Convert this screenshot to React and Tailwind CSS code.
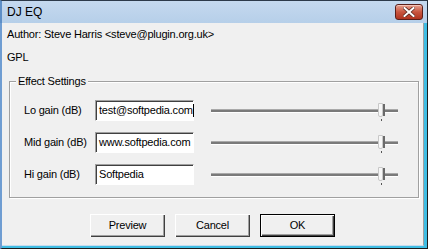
import React from 'react';

const rows = [
  { label: 'Lo gain (dB)', value: 'test@softpedia.com', caret: true },
  { label: 'Mid gain (dB)', value: 'www.softpedia.com' },
  { label: 'Hi gain (dB)', value: 'Softpedia' },
];

const Slider = () => (
  <div className="relative w-[187px] h-[21px] flex items-center">
    {/* track */}
    <div className="w-full h-[4px] border-t border-t-[#a9a9a9] bg-[#7a7a7a] border-b border-b-white" />
    {/* thumb */}
    <div className="absolute left-[167px] top-[3px] w-[8px] h-[14px] flex">
      <div className="w-[5px] h-full bg-[#f7f7f7] border border-[#c8c8c8] rounded-b-[2px]" />
      <div className="w-[2px] h-[12px] mt-[1px] bg-[#6a6a6a]" />
    </div>
    <div className="absolute left-[170px] top-[19px] w-[1px] h-[2px] bg-[#555]" />
  </div>
);

const Button = ({ children, primary }) => (
  <button
    className={
      'w-[75px] h-[23px] bg-[#f0f0f0] text-[11px] text-black ' +
      (primary
        ? 'border border-black shadow-[inset_1px_1px_0_#fff,inset_-1px_-1px_0_#404040,inset_-2px_-2px_0_#a0a0a0]'
        : 'shadow-[inset_1px_1px_0_#fff,inset_-1px_-1px_0_#404040,inset_-2px_-2px_0_#a0a0a0]')
    }
  >
    {children}
  </button>
);

export default function App() {
  return (
    <div className="w-[428px] h-[249px] bg-[#f0f0f0] flex flex-col overflow-hidden font-['Liberation_Sans',Arial,sans-serif] text-[11px] tracking-[-0.2px] text-black">

      {/* Title bar */}
      <div className="h-[23px] shrink-0 flex items-center justify-between border-t border-t-[#2d3a4a] border-l-2 border-l-[#5e8fc7] border-r border-r-[#1e2a36] bg-gradient-to-b from-[#c5d9ef] to-[#b6cfe9]">
        <span className="pl-[5px] text-[12px] tracking-normal text-black">DJ EQ</span>
        <div className="mr-[4px] w-[28px] h-[16px] rounded-[3px] border border-[#5a1f1a] bg-gradient-to-b from-[#e6a090] via-[#c8553f] to-[#b0331f] flex items-center justify-center shadow-[inset_0_1px_0_#f3c3b6]">
          <svg width="12" height="10" viewBox="0 0 12 10">
            <path d="M1.5 1 L10.5 9 M10.5 1 L1.5 9" stroke="#5a2a22" strokeWidth="3.6" strokeLinecap="square" />
            <path d="M1.5 1 L10.5 9 M10.5 1 L1.5 9" stroke="#ffffff" strokeWidth="2" strokeLinecap="square" />
          </svg>
        </div>
      </div>

      {/* Body */}
      <div className="flex-1 flex flex-col border-l-2 border-l-[#6f9dd2] border-b border-b-[#1c1c1c] border-r border-r-[#1c1c1c]">
        <div className="flex-1 flex flex-col border-b-2 border-b-[#3fbde3] border-r-[3px] border-r-[#3fbde3]">
          <div className="flex-1 flex flex-col border-r border-r-[#a0a0a0] border-b border-b-[#c6dcef]">

            <div className="pl-[5px] pt-[5px] leading-[13px]">Author: Steve Harris &lt;steve@plugin.org.uk&gt;</div>
            <div className="pl-[5px] pt-[10px] leading-[13px]">GPL</div>

            {/* Effect Settings group */}
            <div className="relative ml-[7px] mr-[4px] mt-[17px] h-[117px] border border-[#a0a0a0] shadow-[1px_1px_0_#fff,inset_1px_1px_0_#fff] pt-[18px] pl-[14px] flex flex-col gap-[11px]">
              <span className="absolute left-[6px] -top-[7px] px-[2px] bg-[#f0f0f0] leading-[13px]">Effect Settings</span>
              {rows.map((r) => (
                <div key={r.label} className="flex items-center h-[21px]">
                  <span className="w-[71px]">{r.label}</span>
                  <div className="w-[99px] h-[21px] bg-white border border-t-[#a0a0a0] border-l-[#a0a0a0] border-b-white border-r-white shadow-[inset_1px_1px_0_#404040] flex items-center pl-[3px] leading-[13px]">
                    <span>{r.value}</span>
                    {r.caret && <span className="w-[1px] h-[13px] bg-black" />}
                  </div>
                  <div className="ml-[17px]">
                    <Slider />
                  </div>
                </div>
              ))}
            </div>

            {/* Buttons */}
            <div className="flex justify-center gap-[10px] mt-[16px]">
              <Button>Preview</Button>
              <Button>Cancel</Button>
              <Button primary>OK</Button>
            </div>
          </div>
        </div>
      </div>
    </div>
  );
}
